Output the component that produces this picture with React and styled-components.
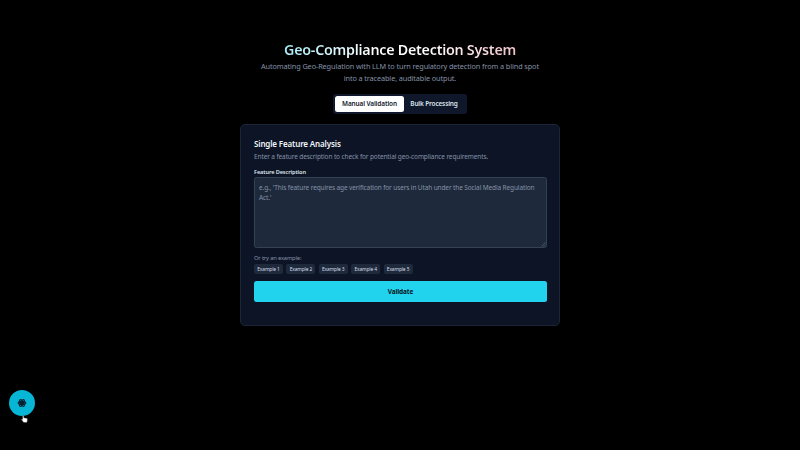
import React from 'react';
import styled, { createGlobalStyle } from 'styled-components';

const GlobalStyle = createGlobalStyle`
  * { box-sizing: border-box; }
  body { margin: 0; background: #000; overflow: hidden; }
  button, textarea { font-family: inherit; margin: 0; letter-spacing: inherit; }
`;

const Page = styled.main`
  height: 450px;
  padding-top: 40px;
  display: flex;
  flex-direction: column;
  align-items: center;
  background: #000;
  color: #f1f5f9;
  font-family: 'Noto Sans', 'Open Sans', sans-serif;
`;

const Title = styled.h1`
  margin: 0;
  height: 20px;
  font-size: 14.3px;
  line-height: 20px;
  font-weight: 600;
  letter-spacing: -0.257px;
  white-space: nowrap;
  color: transparent;
  background: linear-gradient(90deg, #a5ecf9 0%, #ffffff 38%, #ffffff 60%, #eec3cb 100%);
  background-clip: text;
  -webkit-background-clip: text;
`;

const Subtitle = styled.p`
  margin: 1px 0 0;
  font-size: 7.3px;
  line-height: 11.7px;
  letter-spacing: -0.107px;
  text-align: center;
  color: #8492a8;
`;

const TabList = styled.div`
  display: flex;
  width: 134px;
  height: 20px;
  margin-top: 9.6px;
  padding: 2px;
  border-radius: 3px;
  background: #0f172a;
`;

const Tab = styled.button`
  flex: 0 0 ${(p) => (p.$active ? 69 : 60)}px;
  height: 16px;
  padding: 0;
  border: 0;
  border-radius: 2.5px;
  font-size: 6.45px;
  line-height: 16px;
  font-weight: 600;
  letter-spacing: ${(p) => (p.$active ? -0.117 : -0.142)}px;
  color: ${(p) => (p.$active ? '#0f172a' : '#dbe2eb')};
  background: ${(p) => (p.$active ? '#fff' : 'transparent')};
`;

const Card = styled.section`
  width: 320px;
  height: 202px;
  margin-top: 10px;
  padding: 13px;
  display: flex;
  flex-direction: column;
  border: 1px solid #1a2537;
  border-radius: 5px;
  background: #0d1425;
`;

const CardTitle = styled.h2`
  margin: 0;
  font-size: 8px;
  line-height: 12px;
  font-weight: 600;
  letter-spacing: -0.137px;
  color: #f1f5f9;
`;

const CardText = styled.p`
  margin: 0;
  font-size: 6.5px;
  line-height: 13px;
  letter-spacing: -0.115px;
  color: #8492a8;
`;

const Label = styled.label`
  margin-top: 4px;
  font-size: 5.6px;
  line-height: 10px;
  font-weight: 600;
  letter-spacing: -0.096px;
  color: #dfe5ee;
`;

const Description = styled.textarea`
  display: block;
  width: 293px;
  height: 71px;
  padding: 5px 4px;
  border: 1px solid #334155;
  border-radius: 2.5px;
  background: #1e293b;
  color: #e2e8f0;
  font-size: 6.5px;
  line-height: 10px;
  letter-spacing: -0.12px;
  outline: 0;
  resize: none;
  &::placeholder { color: #8492a8; opacity: 1; }
`;

const Field = styled.div`
  display: grid;
  width: 293px;
  > * { grid-area: 1 / 1; }
`;

const Grip = styled.svg`
  align-self: end;
  justify-self: end;
  width: 5px;
  height: 5px;
  margin: 0 1px 1px 0;
  pointer-events: none;
`;

const Hint = styled.p`
  margin: 5px 0 0;
  font-size: 5.8px;
  line-height: 11px;
  letter-spacing: -0.178px;
  color: #8492a8;
`;

const Examples = styled.div`
  display: flex;
  gap: 3.4px;
`;

const Example = styled.button`
  width: 29px;
  height: 10px;
  padding: 0;
  border: 0;
  border-radius: 2px;
  background: #1e293b;
  color: #d5dde8;
  font-size: 4.9px;
  line-height: 10px;
  letter-spacing: -0.14px;
`;

const Submit = styled.button`
  width: 293px;
  height: 21px;
  margin-top: 7px;
  padding: 0;
  border: 0;
  border-radius: 2.5px;
  background: #22d3ee;
  color: #06141d;
  font-size: 6.5px;
  line-height: 21px;
  font-weight: 700;
  letter-spacing: -0.13px;
`;

const Floating = styled.div`
  position: fixed;
  left: 8.6px;
  top: 389.6px;
  width: 26px;
  height: 26px;
  border-radius: 50%;
  display: grid;
  place-items: center;
  background: #06b6d4;
`;

const Cursor = styled.svg`
  position: fixed;
  left: 21px;
  top: 415px;
  width: 7px;
  height: 8px;
`;

const examples = [1, 2, 3, 4, 5];

export default function App() {
  return (
    <Page>
      <GlobalStyle />
      <Title>Geo-Compliance Detection System</Title>
      <Subtitle>
        Automating Geo-Regulation with LLM to turn regulatory detection from a blind spot
        <br />
        into a traceable, auditable output.
      </Subtitle>
      <TabList>
        <Tab $active>Manual Validation</Tab>
        <Tab>Bulk Processing</Tab>
      </TabList>
      <Card>
        <CardTitle>Single Feature Analysis</CardTitle>
        <CardText>Enter a feature description to check for potential geo-compliance requirements.</CardText>
        <Label htmlFor="description">Feature Description</Label>
        <Field>
          <Description
            id="description"
            placeholder="e.g., 'This feature requires age verification for users in Utah under the Social Media Regulation Act.'"
          />
          <Grip viewBox="0 0 5 5" stroke="#738094" strokeWidth=".5">
            <path d="M.5 4.5l4-4M2.7 4.7l2-2" />
          </Grip>
        </Field>
        <Hint>Or try an example:</Hint>
        <Examples>
          {examples.map((n) => (
            <Example key={n}>Example {n}</Example>
          ))}
        </Examples>
        <Submit>Validate</Submit>
      </Card>
      <Floating>
        <svg width="10" height="10" viewBox="0 0 24 24" fill="none" stroke="#082333" strokeWidth="2.8">
          <circle cx="12" cy="12" r="1.6" fill="#082333" />
          <ellipse cx="12" cy="12" rx="9" ry="3.8" />
          <ellipse cx="12" cy="12" rx="9" ry="3.8" transform="rotate(60 12 12)" />
          <ellipse cx="12" cy="12" rx="9" ry="3.8" transform="rotate(120 12 12)" />
        </svg>
      </Floating>
      <Cursor viewBox="0 0 7 8">
        <path
          d="M1.8.4c.7-.2 1 .2 1 .8v1.5l2.8.6c.8.2 1 .6.9 1.3L6 7.6H2.7L.5 4.7c-.3-.5.3-1 .8-.6l.3.3V1z"
          fill="#fff"
          stroke="#222"
          strokeWidth=".4"
        />
      </Cursor>
    </Page>
  );
}
